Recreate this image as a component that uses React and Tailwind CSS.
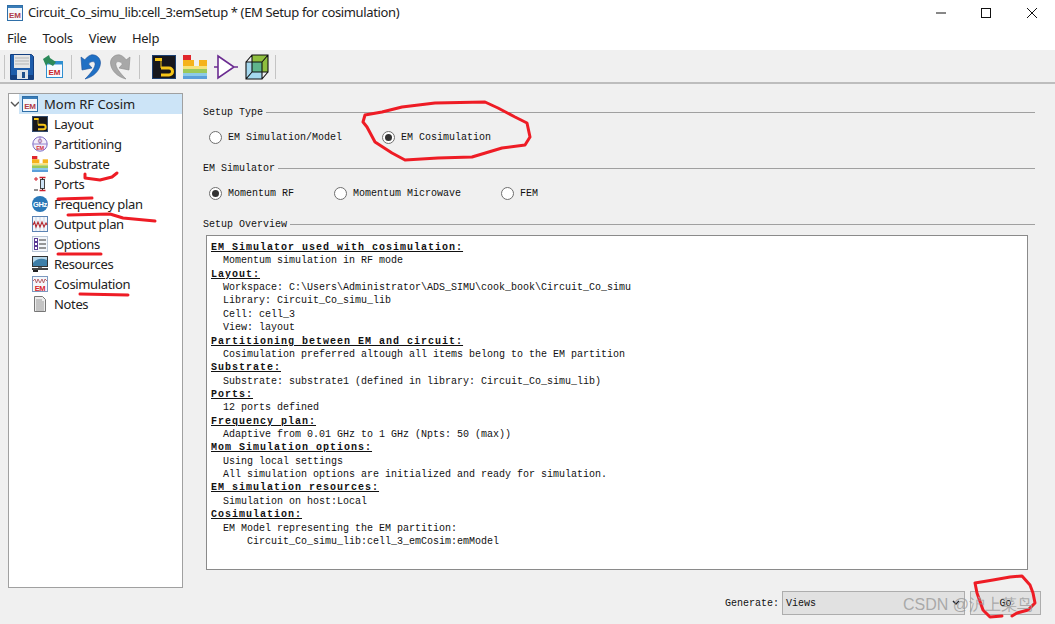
import React from 'react';

const uiFont = 'font-["Noto_Sans",sans-serif]';
const monoFont = 'font-["Liberation_Mono",monospace]';

// Toolbar + tree icons
const SaveIcon = () => (
  <svg width="24" height="26" viewBox="0 0 24 26">
    <path d="M0.5 0.5h21l2 2v23H0.5z" fill="#1d5cab" stroke="#143f80" />
    <rect x="1" y="21" width="22" height="4" fill="#143f80" />
    <rect x="4" y="1" width="16" height="13" fill="#e6e6e6" />
    <path d="M5 4h14M5 7h14M5 10h14" stroke="#b5b5b5" />
    <rect x="7" y="16" width="11" height="9" fill="#dfe3e8" />
    <rect x="12" y="18" width="3" height="6" fill="#1f4f8a" />
  </svg>
);
const EmBackIcon = () => (
  <svg width="20" height="26" viewBox="0 0 20 26">
    <rect x="3.5" y="7.5" width="16" height="16" fill="#f7fbff" stroke="#2f8fd0" />
    <rect x="4" y="8" width="15" height="2.5" fill="#2f8fd0" />
    <path d="M0 5l6-4 1 3 6 4-3 4-5-3-2 3z" fill="#2c8a5a" />
    <text x="11.5" y="20.5" textAnchor="middle" fontSize="8" fontWeight="700" fill="#c8242c" fontFamily="Liberation Sans">EM</text>
  </svg>
);
const hookPath = 'M1 3L2 16L12 14L8.5 10C11 7 14 7 15 9C16 13 11 19 5 25C13 23 20 17 20.5 9C20.5 3 15 0 11 1C8 2 6 4 5 6z';
const UndoIcon = () => (
  <svg width="21" height="26" viewBox="0 0 21 26">
    <path d={hookPath} fill="#2070c4" stroke="#174f9c" strokeWidth="0.6" />
  </svg>
);
const RedoIcon = () => (
  <svg width="21" height="26" viewBox="0 0 21 26">
    <path d={hookPath} transform="translate(21,0) scale(-1,1)" fill="#a8a8a8" stroke="#8a8a8a" strokeWidth="0.6" />
  </svg>
);
const LayoutIcon = ({ size = 24 }) => (
  <svg width={size} height={size} viewBox="0 0 24 24">
    <rect x="0.5" y="0.5" width="23" height="23" fill="#17171c" stroke="#1c3f70" />
    <path d="M3 4.5h7M9 13h8a3.5 3.5 0 0 1 0 7H9" fill="none" stroke="#f5c518" strokeWidth="3" />
    <path d="M9 5v8" stroke="#f5c518" strokeWidth="1" />
  </svg>
);
const SubstrateIcon = ({ size = 24 }) => (
  <svg width={size} height={size} viewBox="0 0 24 24">
    <rect x="0" y="0" width="8" height="5" fill="#e0262b" />
    <rect x="0" y="5" width="11" height="6" fill="#f5b21b" />
    <rect x="16" y="5" width="8" height="6" fill="#f5b21b" />
    <rect x="0" y="11" width="24" height="3" fill="#f6e27a" />
    <rect x="0" y="14" width="24" height="4" fill="#9cc95a" />
    <rect x="0" y="18" width="24" height="3" fill="#8ccbe8" />
    <rect x="0" y="21" width="24" height="3" fill="#5a9fdb" />
  </svg>
);
const AmpIcon = () => (
  <svg width="24" height="26" viewBox="0 0 24 26">
    <path d="M4 2l16 11L4 24z" fill="#fff" />
    <path d="M0 13h4M20 13h4M4 2l16 11L4 24z" fill="none" stroke="#6b2c91" strokeWidth="1.6" />
  </svg>
);
const CubeIcon = () => (
  <svg width="24" height="26" viewBox="0 0 24 26">
    <path d="M1 8h16v17H1z" fill="#a5d8ee" />
    <path d="M7 1h16v17H7z" fill="#8fbf3f" />
    <path d="M7 8h10v10H7z" fill="#5fb58c" />
    <path d="M1 8h16v17H1zM7 1h16v17H7zM1 8l6-7M17 8l6-7M1 25l6-7M17 25l6-7" fill="none" stroke="#111" strokeWidth="1.1" />
  </svg>
);
const EmSmall = () => (
  <svg width="16" height="16" viewBox="0 0 16 16" className="shrink-0">
    <rect x="0.5" y="0.5" width="15" height="15" fill="#f4f8fc" stroke="#2f6fa8" />
    <rect x="1" y="1" width="14" height="2" fill="#3a7db8" />
    <text x="8" y="12.5" textAnchor="middle" fontSize="8" fontWeight="700" fill="#b03a48" fontFamily="Liberation Sans">EM</text>
  </svg>
);
const PartitionIcon = () => (
  <svg width="16" height="16" viewBox="0 0 16 16">
    <circle cx="8" cy="8" r="7.2" fill="#f3eefa" stroke="#7c6bc4" />
    <path d="M1 8h14M8 1v7" stroke="#7c6bc4" strokeWidth="0.8" />
    <circle cx="8" cy="5" r="1.8" fill="none" stroke="#a86b9c" strokeWidth="0.8" />
    <text x="8" y="14" textAnchor="middle" fontSize="5.5" fontWeight="700" fill="#d0303c" fontFamily="Liberation Sans">EM</text>
  </svg>
);
const PortsIcon = () => (
  <svg width="16" height="16" viewBox="0 0 16 16">
    <rect x="8.5" y="3.5" width="4" height="9" fill="#cfe3f5" stroke="#444" />
    <path d="M7.5 1.5h6M7.5 14.5h6" stroke="#d0202c" strokeWidth="1.4" />
    <path d="M10.5 2v2M10.5 12v2" stroke="#333" />
    <path d="M2 3h4M4 1v4" stroke="#d0202c" />
    <path d="M2 14h4" stroke="#222" />
  </svg>
);
const GhzIcon = () => (
  <svg width="16" height="16" viewBox="0 0 16 16">
    <circle cx="8" cy="8" r="8" fill="#2a78b8" />
    <text x="8" y="10.8" textAnchor="middle" fontSize="7.5" fontWeight="700" fill="#fff" fontFamily="Liberation Sans">GHz</text>
  </svg>
);
const OutputIcon = () => (
  <svg width="16" height="16" viewBox="0 0 16 16">
    <rect x="0.5" y="0.5" width="15" height="15" fill="#f4f7fb" stroke="#5b83b4" />
    <path d="M4 1v14M8 1v14M12 1v14" stroke="#b7c8dd" strokeWidth="0.7" />
    <path d="M1 9l1.5-3L4 11l2-5 2 5 2-5 2 5 2-4 1 2" fill="none" stroke="#b4262e" strokeWidth="1.1" />
  </svg>
);
const OptionsIcon = () => (
  <svg width="16" height="16" viewBox="0 0 16 16">
    <rect x="0.5" y="0.5" width="15" height="15" fill="#f3f6fa" stroke="#b9c6d6" />
    <rect x="2.5" y="2.5" width="3" height="3" fill="#fff" stroke="#5a3a94" />
    <rect x="2.5" y="6.5" width="3" height="3" fill="#fff" stroke="#5a3a94" />
    <rect x="2.5" y="10.5" width="3" height="3" fill="#fff" stroke="#5a3a94" />
    <path d="M7 4h7M7 8h7M7 12h7" stroke="#777" strokeWidth="1.3" />
  </svg>
);
const ResourcesIcon = () => (
  <svg width="16" height="16" viewBox="0 0 16 16">
    <rect x="0.5" y="0.5" width="15" height="10" fill="#3f7fa8" stroke="#333" />
    <path d="M1 7c4-5 9-5 14-3v-3H1z" fill="#b6d7ea" />
    <rect x="0" y="12" width="16" height="2" fill="#444" />
    <rect x="6" y="11" width="4" height="1" fill="#777" />
    <rect x="1" y="14" width="5" height="2" fill="#222" />
  </svg>
);
const CosimIcon = () => (
  <svg width="16" height="16" viewBox="0 0 16 16">
    <rect x="0.5" y="0.5" width="15" height="15" fill="#f4f7fb" stroke="#7d9ac0" />
    <path d="M1 5l2-2 1.5 4L6 3l2 4 2-4 1.5 4L13 3l2 2" fill="none" stroke="#b4565e" strokeWidth="0.9" />
    <text x="8" y="15" textAnchor="middle" fontSize="7.5" fontWeight="700" fill="#d8242c" fontFamily="Liberation Sans">EM</text>
  </svg>
);
const NotesIcon = () => (
  <svg width="16" height="16" viewBox="0 0 16 16">
    <path d="M2.5 0.5h8l3 3v12h-11z" fill="#ececec" stroke="#777" />
    <path d="M4 4h6M4 6h8M4 8h8M4 10h8M4 12h8M4 14h8" stroke="#888" strokeWidth="0.8" />
  </svg>
);

const treeItems = [
  ['Layout', <LayoutIcon size={16} />],
  ['Partitioning', <PartitionIcon />],
  ['Substrate', <SubstrateIcon size={16} />],
  ['Ports', <PortsIcon />],
  ['Frequency plan', <GhzIcon />],
  ['Output plan', <OutputIcon />],
  ['Options', <OptionsIcon />],
  ['Resources', <ResourcesIcon />],
  ['Cosimulation', <CosimIcon />],
  ['Notes', <NotesIcon />],
];

const overview = [
  ['h', 'EM Simulator used with cosimulation:'],
  ['t', 'Momentum simulation in RF mode'],
  ['h', 'Layout:'],
  ['t', 'Workspace: C:\\Users\\Administrator\\ADS_SIMU\\cook_book\\Circuit_Co_simu'],
  ['t', 'Library: Circuit_Co_simu_lib'],
  ['t', 'Cell: cell_3'],
  ['t', 'View: layout'],
  ['h', 'Partitioning between EM and circuit:'],
  ['t', 'Cosimulation preferred altough all items belong to the EM partition'],
  ['h', 'Substrate:'],
  ['t', 'Substrate: substrate1 (defined in library: Circuit_Co_simu_lib)'],
  ['h', 'Ports:'],
  ['t', '12 ports defined'],
  ['h', 'Frequency plan:'],
  ['t', 'Adaptive from 0.01 GHz to 1 GHz (Npts: 50 (max))'],
  ['h', 'Mom Simulation options:'],
  ['t', 'Using local settings'],
  ['t', 'All simulation options are initialized and ready for simulation.'],
  ['h', 'EM simulation resources:'],
  ['t', 'Simulation on host:Local'],
  ['h', 'Cosimulation:'],
  ['t', 'EM Model representing the EM partition:'],
  ['x', 'Circuit_Co_simu_lib:cell_3_emCosim:emModel'],
];

const Radio = ({ checked, label, className = '' }) => (
  <div className={`flex items-center ${className}`}>
    <span className="w-[13px] h-[13px] rounded-full border border-[#6f6f6f] bg-white flex items-center justify-center shrink-0">
      {checked && <span className="w-[7px] h-[7px] rounded-full bg-[#333]" />}
    </span>
    <span className="ml-[6px] text-[10px] text-[#111] whitespace-pre">{label}</span>
  </div>
);

const GroupTitle = ({ children }) => (
  <div className="flex items-center h-[12px]">
    <span className="text-[10px] text-[#111] whitespace-pre mr-[3px]">{children}</span>
    <span className="flex-1 h-px bg-[#a0a0a0]" />
  </div>
);

export default function App() {
  return (
    <div className={`relative w-[1055px] h-[624px] overflow-hidden bg-[#f0f0f0] ${uiFont}`}>
      {/* title bar */}
      <div className="h-[26px] bg-white flex items-center pl-[7px]">
        <EmSmall />
        <span className="ml-[5px] text-[13px] tracking-[-0.36px] text-[#222] whitespace-pre">Circuit_Co_simu_lib:cell_3:emSetup * (EM Setup for cosimulation)</span>
        <div className="ml-auto flex items-center">
          <svg width="12" height="12" viewBox="0 0 12 12" className="mr-[33px]"><path d="M1 6h10" stroke="#111" /></svg>
          <svg width="12" height="12" viewBox="0 0 12 12" className="mr-[34px]"><rect x="1.5" y="1.5" width="9" height="9" fill="none" stroke="#111" /></svg>
          <svg width="12" height="12" viewBox="0 0 12 12" className="mr-[17px]"><path d="M1 1l10 10M11 1L1 11" stroke="#111" /></svg>
        </div>
      </div>
      {/* menu */}
      <div className="h-[24px] bg-white flex items-center pl-[7px] pt-px text-[13px] tracking-[-0.3px] text-[#222]">
        <span>File</span>
        <span className="ml-[16px]">Tools</span>
        <span className="ml-[16px]">View</span>
        <span className="ml-[16px]">Help</span>
      </div>
      {/* toolbar */}
      <div className="h-[34px] border-b-2 border-[#bdbdbd] flex items-center pl-[4px] pt-[2px]">
        <span className="w-px h-[24px] bg-[#c4c4c4]" />
        <span className="ml-[5px]"><SaveIcon /></span>
        <span className="ml-[9px]"><EmBackIcon /></span>
        <span className="ml-[8px] w-px h-[24px] bg-[#c4c4c4]" />
        <span className="ml-[8px]"><UndoIcon /></span>
        <span className="ml-[9px]"><RedoIcon /></span>
        <span className="ml-[8px] w-px h-[24px] bg-[#c4c4c4]" />
        <span className="ml-[12px]"><LayoutIcon /></span>
        <span className="ml-[7px]"><SubstrateIcon /></span>
        <span className="ml-[7px]"><AmpIcon /></span>
        <span className="ml-[7px]"><CubeIcon /></span>
        <span className="ml-[6px] w-px h-[24px] bg-[#c4c4c4]" />
      </div>

      <div className="flex pt-[9px] pl-[8px]">
        {/* tree */}
        <div className="w-[175px] h-[495px] bg-white border border-[#a0a0a0] text-[13px] tracking-[-0.35px] text-[#222] shrink-0">
          <div className="flex items-center h-[20px]">
            <svg width="10" height="10" viewBox="0 0 10 10" className="ml-[1px] shrink-0"><path d="M1 3l4 4 4-4" fill="none" stroke="#555" strokeWidth="1.4" /></svg>
            <div className="ml-[-1px] flex-1 h-[20px] bg-[#cce4f7] flex items-center pl-[3px]">
              <EmSmall />
              <span className="ml-[6px] pt-px tracking-normal">Mom RF Cosim</span>
            </div>
          </div>
          {treeItems.map(([label, icon]) => (
            <div key={label} className="flex items-center h-[20px] pl-[23px]">
              <span className="w-[16px] h-[16px] flex shrink-0">{icon}</span>
              <span className="ml-[6px] pt-px whitespace-pre">{label}</span>
            </div>
          ))}
        </div>

        {/* right side */}
        <div className={`ml-[20px] w-[842px] shrink-0 ${monoFont}`}>
          <div className="mt-[13px] pr-[10px]"><GroupTitle>Setup Type</GroupTitle></div>
          <div className="h-[44px] flex items-center pl-[6px] pb-[6px]">
            <Radio label="EM Simulation/Model" />
            <Radio checked label="EM Cosimulation" className="ml-[40px]" />
          </div>
          <div className="pr-[10px]"><GroupTitle>EM Simulator</GroupTitle></div>
          <div className="h-[44px] flex items-center pl-[6px] pb-[6px]">
            <Radio checked label="Momentum RF" className="w-[125px]" />
            <Radio label="Momentum Microwave" className="w-[167px]" />
            <Radio label="FEM" />
          </div>
          <div className="pr-[10px]"><GroupTitle>Setup Overview</GroupTitle></div>
          <div className="mt-[5px] ml-[3px] w-[822px] h-[335px] bg-white border border-[#8a8a8a] pl-[4px] pt-[5px] text-[10px] leading-[13.36px] text-[#111]">
            {overview.map(([kind, text], i) => (
              <div
                key={i}
                className={`whitespace-pre ${
                  kind === 'h' ? 'font-bold underline tracking-[1px]' : kind === 'x' ? 'pl-[36px]' : 'pl-[12px]'
                }`}
              >
                {text}
              </div>
            ))}
          </div>
          <div className="mt-[21px] flex items-center pl-[522px]">
            <span className="text-[10px] text-[#111] whitespace-pre">Generate:</span>
            <div className="ml-[3px] w-[183px] h-[24px] bg-[#e1e1e1] border border-[#adadad] flex items-center pl-[3px] pr-[4px] text-[10px] text-[#111]">
              <span>Views</span>
              <svg width="8" height="6" viewBox="0 0 8 6" className="ml-auto"><path d="M1 1l3 3 3-3" fill="none" stroke="#222" strokeWidth="1.4" /></svg>
            </div>
            <div className="ml-[5px] w-[71px] h-[24px] bg-[#e1e1e1] border border-[#adadad] flex items-center justify-center text-[10px] text-[#111]">Go</div>
          </div>
        </div>
      </div>

      {/* red pen annotations drawn over the window */}
      <svg className="absolute left-0 top-0 pointer-events-none" width="1055" height="624" viewBox="0 0 1055 624" fill="none" stroke="#ee1c25" strokeWidth="3" strokeLinecap="round" strokeLinejoin="round">
        <path d="M365 115L382 112L402 107L435 103L485 102L498 108L515 117L527 123L530 137L525 145L502 148L472 157L438 158L405 160L392 153L375 142L367 127L363 122z" />
        <path d="M85 174v4l15 2 12-3 5-4" />
        <path d="M58 199l34-1" />
        <path d="M68 215l42-1 13 4 32 3" />
        <path d="M58 254l43 0" />
        <path d="M80 294l48 1" />
        <path d="M975 583L993 580L1010 577L1022 576L1030 585L1033 593L1035 603L1028 610L1017 613L1012 616M975 583L977 593L983 610L990 617L1002 616" />
      </svg>
      <span className="absolute left-[903px] top-[593px] text-[16px] text-[#9a9a9a]/80 font-['Liberation_Sans',sans-serif] whitespace-pre">CSDN @沪上菜鸟</span>
    </div>
  );
}
